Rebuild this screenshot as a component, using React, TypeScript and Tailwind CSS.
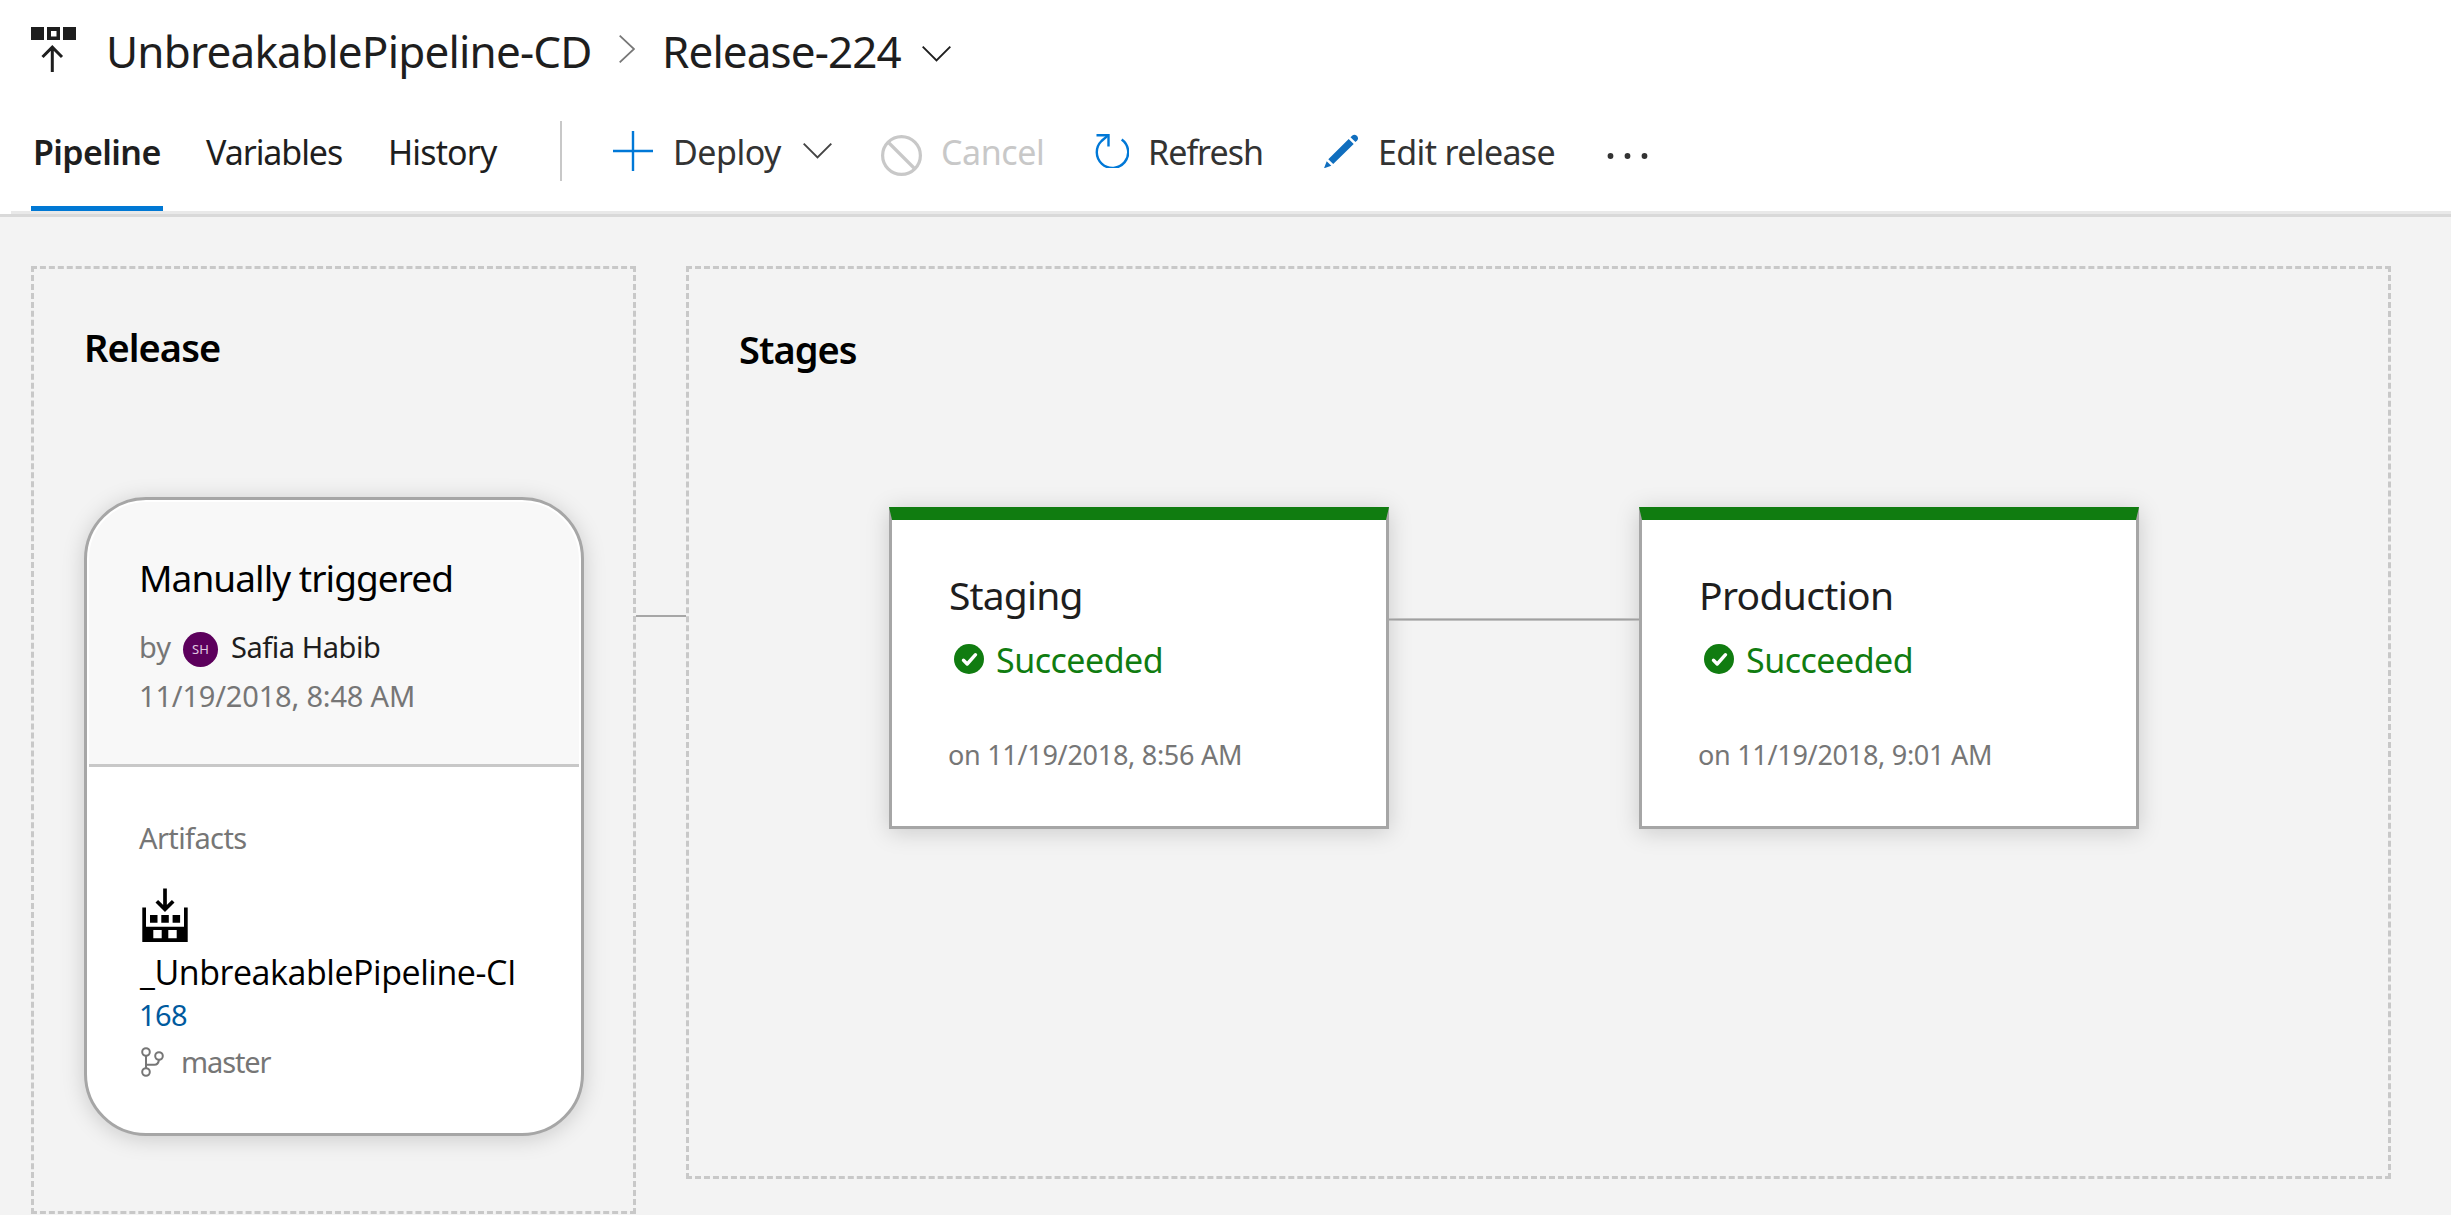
import React from "react";

function ReleaseIcon() {
  return (
    <svg className="mb-[4px] h-[45px] w-[45px] shrink-0" viewBox="0 0 45 45" fill="none">
      <path d="M0 0h13v13H0zM32 0h13v13H32z" fill="#1e1e1e" />
      <path d="M16 0h13v13H16zM20 4v5.5h5.5V4z" fill="#1e1e1e" fillRule="evenodd" />
      <path d="M21.3 45V20M11.5 30l9.8-9.8L31 30" stroke="#1e1e1e" strokeWidth="3" />
    </svg>
  );
}

function ChevronDown({ color, className }: { color: string; className?: string }) {
  return (
    <svg className={"h-[16px] w-[29px] shrink-0 " + (className ?? "")} viewBox="0 0 29 16" fill="none">
      <path d="M.7.7 14.5 14.5 28.3.7" stroke={color} strokeWidth="1.9" />
    </svg>
  );
}

function BuildIcon() {
  return (
    <svg className="mt-[30px] ml-[3px] h-[54px] w-[46px]" viewBox="0 0 46 54" fill="none">
      <path
        d="M.3 19.4H4V38.7H42V19.4H45.7V54H.3zM11.3 42v8.3h8.4V42zM26.3 42v8.3h8.4V42z"
        fill="#000"
        fillRule="evenodd"
      />
      <path d="M8 27h7.5v7.7H8zM19.3 27h7.5v7.7h-7.5zM30.6 27h7.5v7.7h-7.5z" fill="#000" />
      <path d="M23 .5V21M14.8 13.2 23 21.4l8.2-8.2" stroke="#000" strokeWidth="3.7" />
    </svg>
  );
}

function BranchIcon() {
  return (
    <svg className="ml-[2px] h-[30px] w-[24px] shrink-0" viewBox="0 0 24 30" fill="none" stroke="#767676" strokeWidth="2">
      <circle cx="5" cy="5" r="3.8" />
      <circle cx="18" cy="9" r="3.8" />
      <circle cx="5" cy="25" r="3.8" />
      <path d="M5 9v12M18 13c-.6 3-1.8 4.8-4.5 4.8H5" />
    </svg>
  );
}

function SucceededIcon() {
  return (
    <svg className="ml-[6px] h-[30px] w-[30px] shrink-0" viewBox="0 0 30 30" fill="none">
      <circle cx="15" cy="15" r="15" fill="#107c10" />
      <path d="M9.5 16.3 13.2 20 21.5 10.7" stroke="#fff" strokeWidth="3.4" strokeLinecap="round" strokeLinejoin="round" />
    </svg>
  );
}

function StageCard({ name, tracking, date }: { name: string; tracking: string; date: string }) {
  return (
    <article className="h-[322px] w-[500px] shrink-0 border-[3px] border-t-[13px] border-[#a6a6a6] border-t-[#107c10] bg-white pt-[50px] pl-[56px] shadow-[0_3px_22px_rgba(0,0,0,0.17)]">
      <h3 className={"ml-px text-[39px] leading-[50px] text-[#1e1e1e] " + tracking}>{name}</h3>
      <div className="mt-4 flex h-[46px] items-center">
        <SucceededIcon />
        <span className="mt-[2px] ml-3 text-[34px] leading-[46px] tracking-[-0.5px] text-[#107c10]">Succeeded</span>
      </div>
      <p className="mt-[53px] text-[27px] leading-10 tracking-[-0.28px] text-[#767676]">{date}</p>
    </article>
  );
}

function Header() {
  return (
    <header className="bg-white">
      <div className="flex h-[102px] items-center pl-[31px] text-[44px] text-[#1e1e1e]">
        <ReleaseIcon />
        <span className="ml-[30px] w-[487px] tracking-[-0.8px]">UnbreakablePipeline-CD</span>
        <svg className="mb-1 ml-[26px] h-[28px] w-[16px] shrink-0" viewBox="0 0 16 28" fill="none">
          <path d="M.7.7 15 14 .7 27.3" stroke="#777" strokeWidth="1.8" />
        </svg>
        <span className="ml-[27px] w-[241px] tracking-[-0.89px]">Release-224</span>
        <ChevronDown color="#1e1e1e" className="mt-[5px] ml-[19px]" />
      </div>
      <div className="flex h-[109px] items-start pl-[31px] text-[34px] whitespace-nowrap text-[#1e1e1e]">
        <nav className="flex gap-[43px] leading-[101px]">
          <a className="h-[109px] w-[132px] border-b-[5px] border-[#0078d4] pl-[2px] font-semibold tracking-[-0.6px]">Pipeline</a>
          <a className="w-[138px] tracking-[-1.07px]">Variables</a>
          <a className="w-[112px] pl-px tracking-[-0.86px]">History</a>
        </nav>
        <div className="mt-[19px] ml-[61px] h-[60px] w-[2px] bg-[#c8c8c8]" />
        <div className="ml-[51px] flex h-[98px] items-center text-[#333]">
          <svg className="h-[40px] w-[40px] shrink-0" viewBox="0 0 40 40" fill="none">
            <path d="M20 0v40M0 20h40" stroke="#0078d7" strokeWidth="2.4" />
          </svg>
          <span className="mt-[2px] ml-[20px] w-[110px] tracking-[-0.51px]">Deploy</span>
          <ChevronDown color="#444" className="ml-[20px]" />
          <svg className="mt-2 ml-[49px] h-[41px] w-[41px] shrink-0" viewBox="0 0 41 41" fill="none">
            <circle cx="20.5" cy="20.5" r="18.9" stroke="#c8c8c8" strokeWidth="3.2" />
            <path d="m7 7 27 27" stroke="#c8c8c8" strokeWidth="3.2" />
          </svg>
          <span className="mt-[2px] ml-[19px] w-[104px] tracking-[-0.41px] text-[#c8c8c8]">Cancel</span>
          <svg className="ml-[50px] h-[34px] w-[34px] shrink-0" viewBox="0 0 34 34" fill="none" stroke="#0078d7" strokeWidth="2.4">
            <path d="M26.7 5.5A15.7 15.7 0 1 1 6.5 7L12.5 1.8" />
            <path d="M1.5 1.3H13.5V12.5" />
          </svg>
          <span className="mt-[2px] ml-[19px] w-[118px] tracking-[-0.97px]">Refresh</span>
          <svg className="ml-[58px] h-[34px] w-[34px] shrink-0" viewBox="0 0 34 34" fill="#106ebe">
            <path d="M0 34.3 2.7 27.3 7.3 31.8zM4.3 25.3 24.7 5l5 4.9L9.2 30.1z" />
            <path d="M26.5 3.2 28.3 1.5Q30.5-.2 32.8 1.8 35 4.2 33.3 6.3L31.5 8.1z" />
          </svg>
          <span className="mt-[2px] ml-[20px] w-[179px] tracking-[-0.64px]">Edit release</span>
          <svg className="mt-[9px] ml-[50px] h-[6px] w-[41px] shrink-0" viewBox="0 0 41 6" fill="#333">
            <circle cx="3.5" cy="3" r="2.9" />
            <circle cx="20.5" cy="3" r="2.9" />
            <circle cx="37.5" cy="3" r="2.9" />
          </svg>
        </div>
      </div>
      <div className="ml-[11px] h-[3px] bg-[#e9e9e9]" />
      <div className="h-[3px] bg-[#d9d9d9]" />
    </header>
  );
}

export default function App() {
  return (
    <div className="flex h-[1215px] w-[2451px] flex-col overflow-hidden bg-[#f3f3f3] font-['Noto_Sans',sans-serif] whitespace-nowrap">
      <Header />
      <main className="flex items-start pt-[49px] pl-[31px]">
        <section className="h-[948px] w-[605px] shrink-0 border-[3px] border-dashed border-[#c8c8c8]">
          <h2 className="mt-[53px] ml-[50px] text-[38px] leading-[50px] font-semibold tracking-[-0.95px] text-black">Release</h2>
          <article className="mt-[125px] ml-[50px] h-[639px] w-[500px] rounded-[62px] border-[3px] border-[#a6a6a6] bg-white p-[2px] shadow-[0_3px_22px_rgba(0,0,0,0.17)]">
            <div className="h-[265px] rounded-t-[57px] border-b-[3px] border-[#c8c8c8] bg-[#f8f8f8] pt-[50px] pl-[50px]">
              <h3 className="text-[37px] leading-[52px] tracking-[-0.95px] text-black">Manually triggered</h3>
              <div className="mt-[23px] flex h-10 items-center text-[29px] leading-10">
                <span className="w-11 text-[#767676]">by</span>
                <span className="mt-1 flex h-[35px] w-[35px] items-center justify-center rounded-full bg-[#5c005c] text-[13px] leading-none text-[#e0c8e0]">
                  SH
                </span>
                <span className="ml-[13px] tracking-[-0.45px] text-[#1e1e1e]">Safia Habib</span>
              </div>
              <p className="mt-[9px] text-[29px] leading-10 tracking-[-0.18px] text-[#767676]">11/19/2018, 8:48 AM</p>
            </div>
            <div className="pt-[51px] pl-[50px] text-[29px] leading-10 text-[#767676]">
              <p className="tracking-[-0.6px]">Artifacts</p>
              <BuildIcon />
              <p className="mt-[7px] ml-px font-['Open_Sans',sans-serif] text-[34px] leading-[46px] tracking-[-0.45px] text-black">
                _UnbreakablePipeline-CI
              </p>
              <p className="tracking-[-0.59px] text-[#005a9e]">168</p>
              <div className="mt-[7px] flex h-10 items-center">
                <BranchIcon />
                <span className="ml-[16px] tracking-[-1.1px]">master</span>
              </div>
            </div>
          </article>
        </section>
        <div className="mt-[349px] h-[2px] w-[50px] shrink-0 bg-[#a6a6a6]" />
        <section className="h-[913px] w-[1705px] shrink-0 border-[3px] border-dashed border-[#c8c8c8]">
          <h2 className="mt-[55px] ml-[50px] text-[38px] leading-[50px] font-semibold tracking-[-0.95px] text-black">Stages</h2>
          <div className="mt-[133px] ml-[200px] flex items-start">
            <StageCard name="Staging" tracking="tracking-[-0.84px]" date="on 11/19/2018, 8:56 AM" />
            <div className="relative z-10 mt-[111px] h-[3px] w-[250px] border-y border-[#c0c0c0] bg-[#a0a0a0]" />
            <StageCard name="Production" tracking="tracking-[-0.67px]" date="on 11/19/2018, 9:01 AM" />
          </div>
        </section>
      </main>
    </div>
  );
}
